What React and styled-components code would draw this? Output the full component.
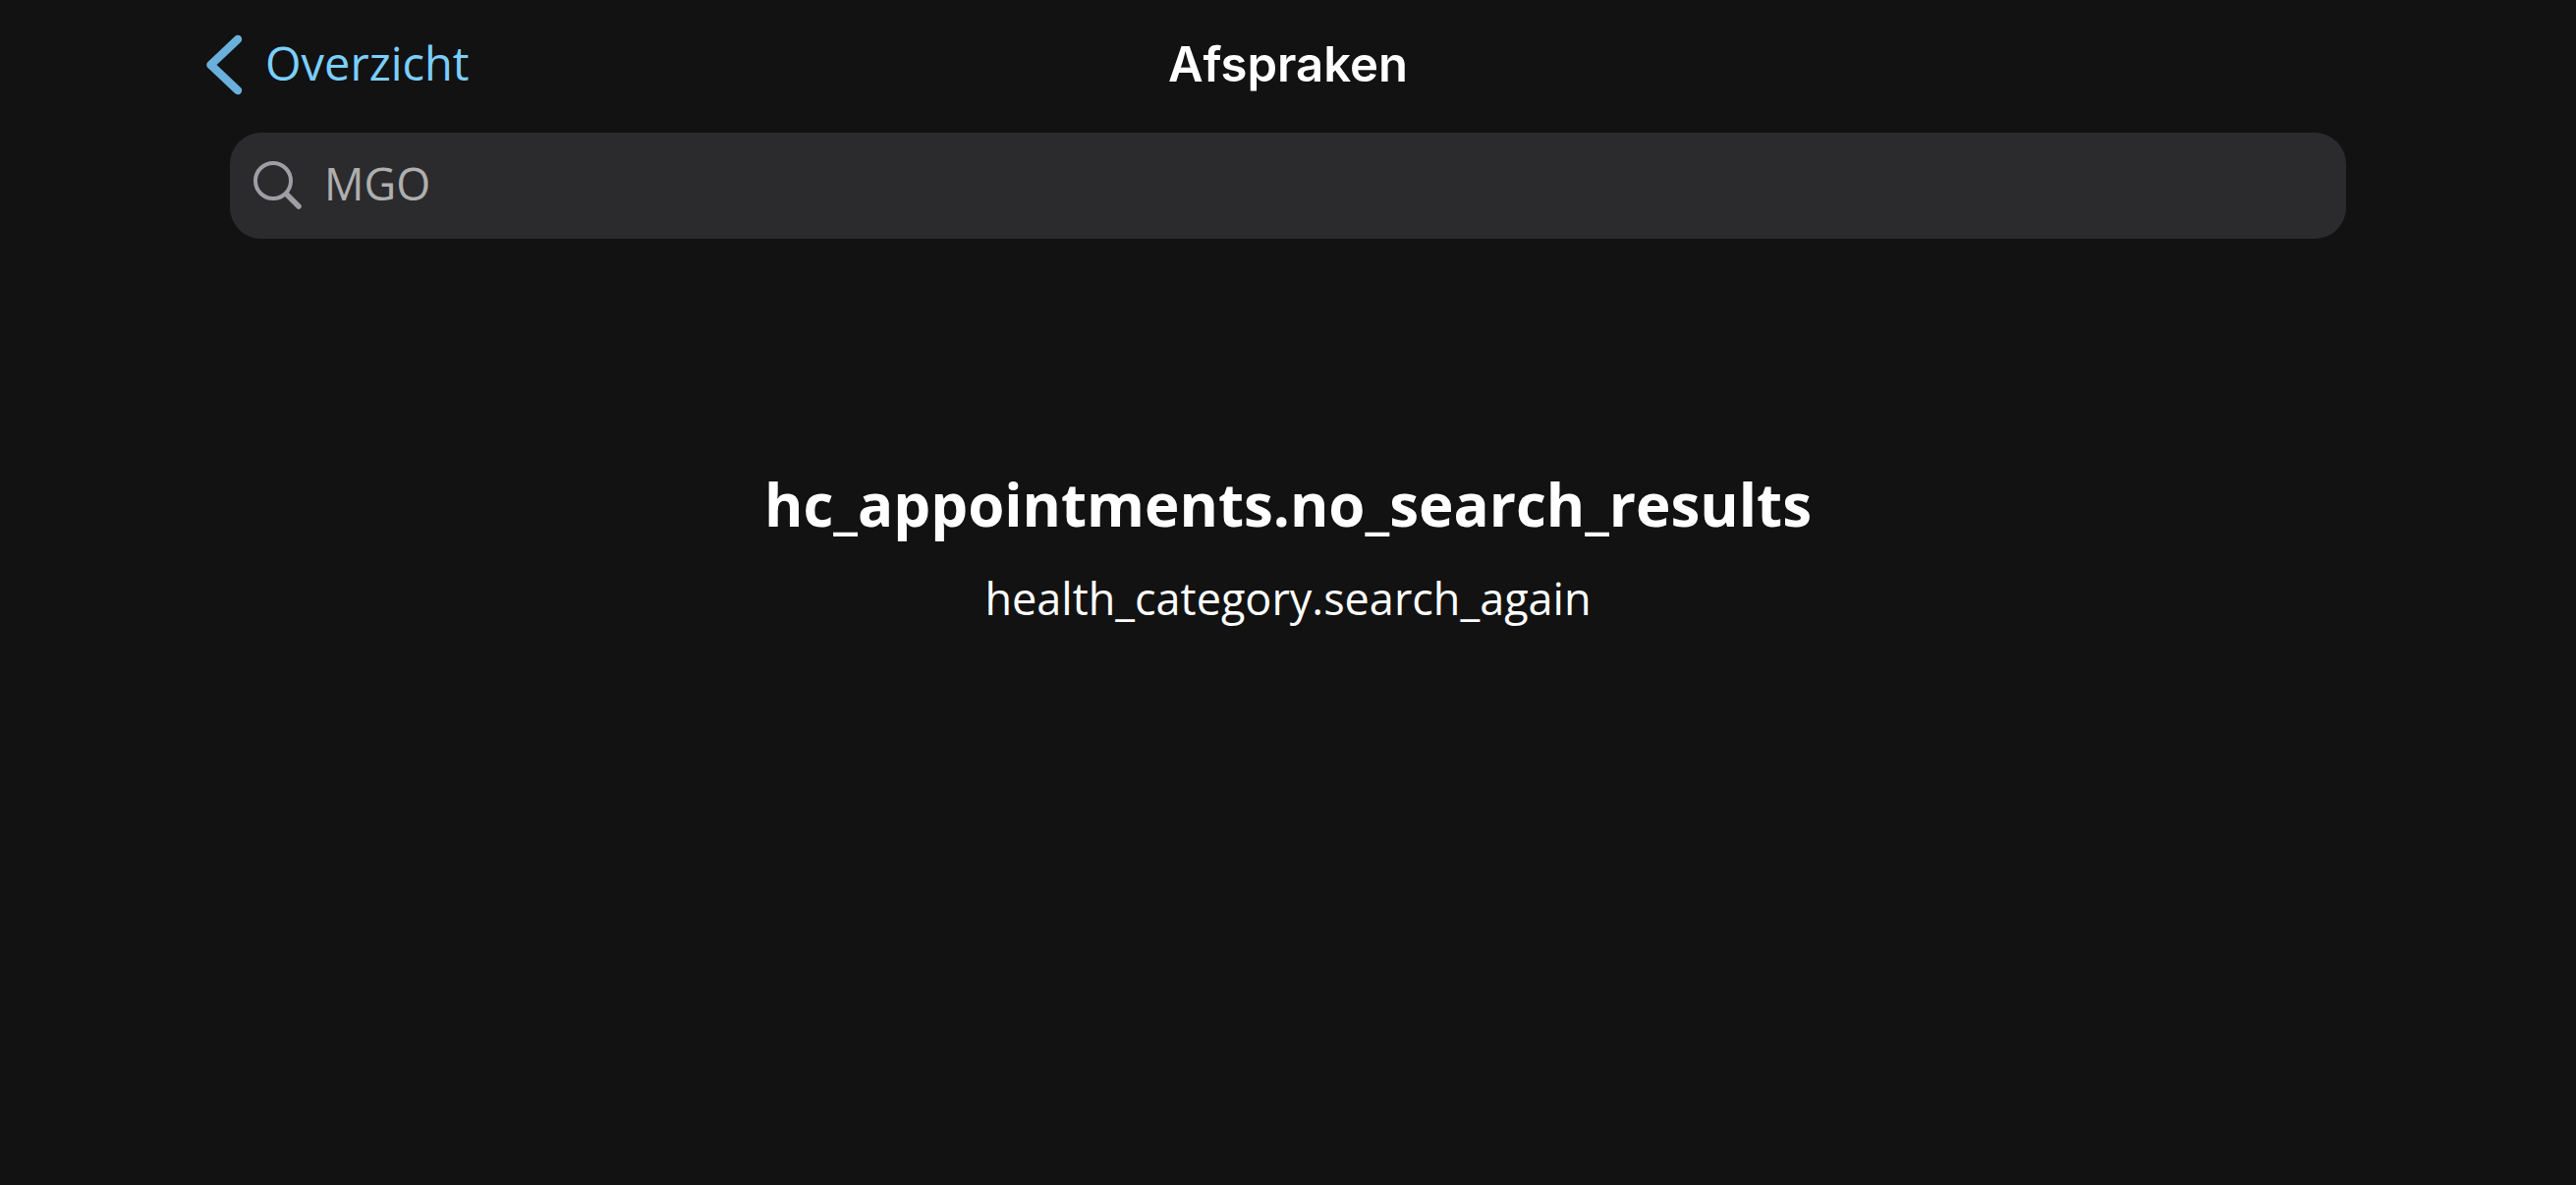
import React, { useState } from "react";
import styled, { createGlobalStyle } from "styled-components";

const GlobalStyle = createGlobalStyle`
  *, *::before, *::after {
    box-sizing: border-box;
  }

  body {
    margin: 0;
    background: #121212;
    color: #ffffff;
    font-family: "Open Sans", "Noto Sans", sans-serif;
    -webkit-font-smoothing: antialiased;
  }
`;

const Screen = styled.div`
  min-height: 100vh;
  display: flex;
  flex-direction: column;
`;

const NavBar = styled.header`
  display: grid;
  grid-template-columns: 1fr auto 1fr;
  align-items: center;
  height: 135px;
  padding: 0 208px 4px;
`;

const BackLink = styled.a`
  display: inline-flex;
  align-items: center;
  justify-self: start;
  gap: 22px;
  color: #7bcfff;
  font-size: 47px;
  line-height: 64px;
  text-decoration: none;
`;

const BackLabel = styled.span`
  padding-bottom: 4px;
`;

const Chevron = styled.svg`
  width: 40px;
  height: 64px;
  color: #6ab0dc;
`;

const Title = styled.h1`
  margin: 0;
  font-family: Inter, sans-serif;
  font-size: 49px;
  font-weight: 600;
  line-height: 64px;
`;

const SearchField = styled.label`
  display: flex;
  align-items: center;
  gap: 20px;
  height: 108px;
  margin: 0 234px;
  padding: 0 24px;
  border-radius: 32px;
  background: #2b2b2d;
`;

const SearchIcon = styled.svg`
  flex: none;
  width: 52px;
  height: 52px;
  color: #9f9ea5;
`;

const SearchInput = styled.input`
  flex: 1;
  min-width: 0;
  padding: 0 0 4px;
  border: 0;
  outline: 0;
  background: transparent;
  color: #ffffff;
  font: inherit;
  font-size: 45px;
  line-height: 64px;

  &::placeholder {
    color: #afafaf;
    opacity: 1;
  }
`;

const EmptyState = styled.main`
  display: flex;
  flex-direction: column;
  align-items: center;
  gap: 20px;
  padding: 226px 234px 0;
  text-align: center;
`;

const EmptyHeading = styled.h2`
  margin: 0;
  font-size: 60px;
  font-weight: 700;
  line-height: 88px;
`;

const EmptyText = styled.p`
  margin: 0;
  font-size: 45px;
  line-height: 64px;
`;

export default function App() {
  const [query, setQuery] = useState("");

  return (
    <>
      <GlobalStyle />
      <Screen>
        <NavBar>
          <BackLink href="#overzicht">
            <Chevron viewBox="0 0 40 64" fill="none" aria-hidden="true">
              <path
                d="M34 6 6.5 32 34 58"
                stroke="currentColor"
                strokeWidth="8.5"
                strokeLinecap="round"
                strokeLinejoin="round"
              />
            </Chevron>
            <BackLabel>Overzicht</BackLabel>
          </BackLink>
          <Title>Afspraken</Title>
        </NavBar>
        <SearchField>
          <SearchIcon viewBox="0 0 52 52" fill="none" aria-hidden="true">
            <circle cx="20" cy="21" r="18" stroke="currentColor" strokeWidth="4" />
            <path
              d="m34 35 12 12"
              stroke="currentColor"
              strokeWidth="5.5"
              strokeLinecap="round"
            />
          </SearchIcon>
          <SearchInput
            type="search"
            aria-label="Zoeken"
            placeholder="MGO"
            value={query}
            onChange={(event) => setQuery(event.target.value)}
          />
        </SearchField>
        <EmptyState>
          <EmptyHeading>hc_appointments.no_search_results</EmptyHeading>
          <EmptyText>health_category.search_again</EmptyText>
        </EmptyState>
      </Screen>
    </>
  );
}
